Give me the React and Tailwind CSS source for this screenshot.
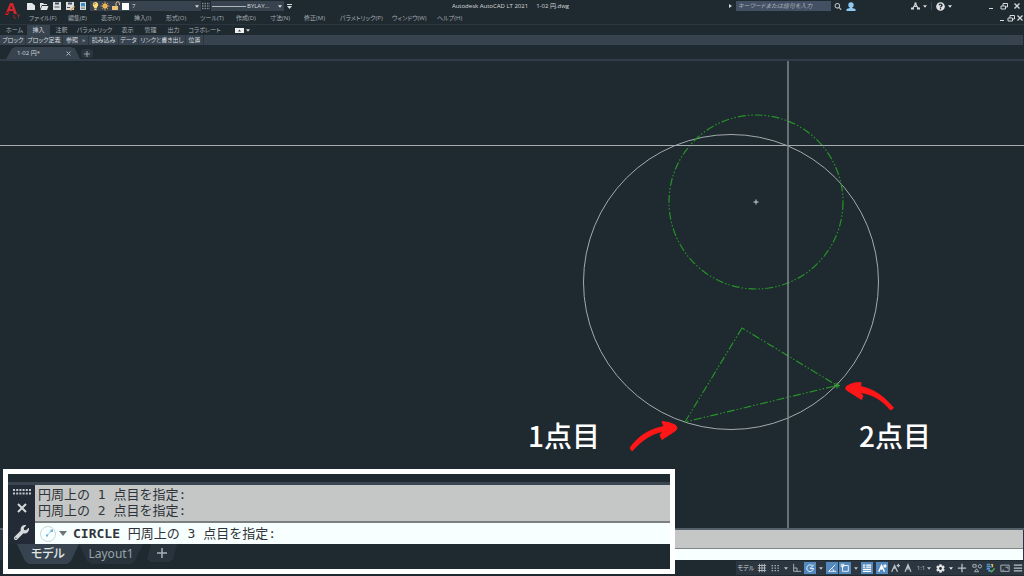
import { FaWrench, FaCog, FaSearch, FaUser, FaLightbulb, FaSun, FaQuestionCircle } from 'react-icons/fa';

const menuItems = [
  { label: 'ファイル(F)', width: 'w-[39px]' },
  { label: '編集(E)', width: 'w-[33px]' },
  { label: '表示(V)', width: 'w-[33px]' },
  { label: '挿入(I)', width: 'w-8' },
  { label: '形式(O)', width: 'w-[34px]' },
  { label: 'ツール(T)', width: 'w-[36px]' },
  { label: '作成(D)', width: 'w-[34px]' },
  { label: '寸法(N)', width: 'w-[34px]' },
  { label: '修正(M)', width: 'w-[36px]' },
  { label: 'パラメトリック(P)', width: 'w-[52px]' },
  { label: 'ウィンドウ(W)', width: 'w-[45px]' },
  { label: 'ヘルプ(H)', width: 'w-[36px]' },
];

const ribbonTabs = [
  { label: 'ホーム', width: 'w-[25px]' },
  { label: '挿入', width: 'w-[23px]', active: true },
  { label: '注釈', width: 'w-[23px]' },
  { label: 'パラメトリック', width: 'w-[43px]' },
  { label: '表示', width: 'w-[23px]' },
  { label: '管理', width: 'w-[23px]' },
  { label: '出力', width: 'w-[23px]' },
  { label: 'コラボレート', width: 'w-[39px]' },
];

const panels = [
  { label: 'ブロック', width: 'w-[25px]' },
  { label: 'ブロック定義', width: 'w-[37px]' },
  { label: '参照', width: 'w-[26px]', more: true },
  { label: '読み込み', width: 'w-[30px]' },
  { label: 'データ', width: 'w-[20px]' },
  { label: 'リンクと書き出し', width: 'w-[47px]' },
  { label: '位置', width: 'w-[18px]' },
];

const Caret = ({ className = '' }) => (
  <svg viewBox="0 0 6 4" className={`w-1 h-[3px] shrink-0 ${className}`}>
    <path d="M0 0h6L3 4z" fill="currentColor" />
  </svg>
);

const Logo = () => (
  <svg viewBox="0 0 16 17" className="w-4 h-[17px]">
    <path d="M1 13L6 1h3l4 11h-3l-1-3H5.500L4 13z" fill="#d3252c" />
    <path d="M6.200 7h2.200L7.300 3.500z" fill="#1f2930" />
    <path d="M1 13l3-1.500 1-2.500-3 1z" fill="#8e1218" />
    <path d="M10 13v3h2M13 13h3M14.500 13v3" stroke="#8e2a2c" fill="none" />
  </svg>
);

const QuickIcons = {
  new: <path d="M1 2h5l3 2.500V9H1z" fill="#e5e8ea" />,
  open: <path d="M1 2h3l1 1h3v1H3L1 8zM3 5h6.500L8 9H1.500z" fill="#e3e6e6" />,
  save: (
    <>
      <path d="M1 1h8v8H1z" fill="#dcdfe1" />
      <path d="M3 1.500h4v2H3zM2.500 5.500h5v1h-5z" fill="#49545e" />
    </>
  ),
  saveAs: (
    <>
      <path d="M1 1h8v8H1z" fill="#dcdfe1" />
      <path d="M3 1.500h4v2H3zM2 6h3v1H2z" fill="#49545e" />
      <path d="M5 9l4-4 1 1-4 4z" fill="#e0a04a" />
    </>
  ),
  plot: (
    <>
      <path d="M2 1h6v8H2z" fill="#d6dde2" />
      <path d="M3 2h4v3H3z" fill="#3d8bc4" />
      <path d="M3 6h4M3 7.500h4" stroke="#64717c" strokeWidth=".7" />
    </>
  ),
};

const QuickButton = ({ name, title }) => (
  <button title={title} className="w-[13px] flex justify-center">
    <svg viewBox="0 0 10 10" className="w-[10px] h-[10px]">{QuickIcons[name]}</svg>
  </button>
);

const WindowButtons = ({ className }) => (
  <div className={`flex items-center text-[#d5d9dc] ${className}`}>
    <button title="最小化">
      <svg viewBox="0 0 8 8" className="w-2 h-2"><path d="M2 6.500h4" stroke="currentColor" /></svg>
    </button>
    <button title="元に戻す">
      <svg viewBox="0 0 8 8" className="w-2 h-2" fill="none" stroke="currentColor">
        <path d="M1 4h4.500v3H1zM3 4V1.500h4.500V5H6" />
      </svg>
    </button>
    <button title="閉じる">
      <svg viewBox="0 0 8 8" className="w-2 h-2"><path d="M1.500 1.500l5 5M6.500 1.500l-5 5" stroke="currentColor" strokeWidth="1.300" /></svg>
    </button>
  </div>
);

const TitleBar = () => (
  <div className="flex items-center h-3">
    <div className="flex items-center">
      <QuickButton name="new" title="新規作成" />
      <QuickButton name="open" title="開く" />
      <QuickButton name="save" title="上書き保存" />
      <QuickButton name="saveAs" title="名前を付けて保存" />
      <QuickButton name="plot" title="印刷" />
    </div>
    <div className="relative flex items-center w-[111px] h-[10px] ml-px pl-[2px] bg-[#37434f] text-[#d5d9dc]">
      <FaLightbulb className="w-[7px] h-2 text-[#ffd97a]" />
      <svg viewBox="0 0 10 10" className="w-[10px] h-[10px] ml-px">
        <circle cx="5" cy="5" r="2.500" fill="#f7c765" />
        <path d="M5 .5v9M.5 5h9M2 2l6 6M8 2L2 8" stroke="#e8a94e" strokeWidth=".8" />
      </svg>
      <svg viewBox="0 0 10 10" className="w-[10px] h-[10px] ml-px">
        <path d="M1 5h6v4H1z" fill="#efc27a" />
        <path d="M5 5V2.500a1.500 1.500 0 0 1 3.500 0V4" fill="none" stroke="#e6c698" />
      </svg>
      <span className="w-[7px] h-[7px] ml-px bg-white" />
      <select aria-label="画層" className="appearance-none flex-1 h-full pl-[3px]">
        <option>7</option>
      </select>
      <Caret className="absolute right-[2px]" />
    </div>
    <svg viewBox="0 0 8 8" className="w-2 h-2 mx-px">
      <path d="M0 1.500h8M0 4h8M0 6.500h8" stroke="#7e8890" strokeWidth="1.500" strokeDasharray="1.500 1" />
    </svg>
    <div className="relative flex items-center w-[73px] h-[10px] pl-px bg-[#37434f] text-[#d5d9dc]">
      <span className="w-[34px] h-px bg-[#aeb5bb]" />
      <select aria-label="線種" className="appearance-none flex-1 h-full pl-px">
        <option>BYLAY...</option>
      </select>
      <Caret className="absolute right-[2px]" />
    </div>
    <button title="カスタマイズ" className="ml-[3px] text-[#d5d9dc]">
      <svg viewBox="0 0 5 5" className="w-[5px] h-[5px]"><path d="M0 0h5v1H0zM0 2h5L2.500 5z" fill="currentColor" /></svg>
    </button>
    <h1 className="flex-1 text-center text-[#d8dcde]">
      Autodesk AutoCAD LT 2021<span className="ml-2">1-02 円.dwg</span>
    </h1>
    <svg viewBox="0 0 3 4" className="w-[3px] h-1 mr-1"><path d="M0 0l3 2-3 2z" fill="#d5d9dc" /></svg>
    <input
      type="search"
      aria-label="検索"
      placeholder="キーワードまたは語句を入力"
      className="w-[95px] h-[10px] px-[2px] bg-[#434f62] placeholder:italic placeholder:text-[#a9b2bf]"
    />
    <button title="検索" className="ml-[3px]"><FaSearch className="w-2 h-[7px] text-[#b9bfc4]" /></button>
    <button title="サインイン" className="ml-1">
      <svg viewBox="0 0 10 9" className="w-[10px] h-[9px]" fill="#8fc8f2"><circle cx="5" cy="3" r="2.700" /><path d="M3.800 5h2.400v1L9.500 7v2H.5V7l3.300-1z" /></svg>
    </button>
    <button title="Autodesk App Store" className="flex items-center gap-[3px] ml-[55px] text-[#d5d9dc]">
      <svg viewBox="0 0 9 8" className="w-[9px] h-2" fill="none" stroke="currentColor">
        <path d="M2 6l2.500-4L7 6M3 4.500h3" strokeWidth="1.200" />
        <path d="M0 6.500h3M6 6.500h3M3.500 1.500h2" strokeWidth="2" />
      </svg>
      <Caret />
    </button>
    <span className="w-px h-2 mx-1 bg-[#3a4651]" />
    <button title="ヘルプ" className="flex items-center gap-[3px] text-[#e2e5e7]">
      <FaQuestionCircle className="w-[9px] h-[9px]" />
      <Caret />
    </button>
    <WindowButtons className="gap-[5px] ml-[35px] mr-[3px]" />
  </div>
);

const MenuBar = () => (
  <nav className="flex items-center h-3 pl-[5px] text-[#a5adb3]">
    {menuItems.map((item) => (
      <button key={item.label} className={`text-left whitespace-nowrap ${item.width}`}>{item.label}</button>
    ))}
    <WindowButtons className="gap-px ml-auto" />
  </nav>
);

const Ribbon = () => (
  <>
    <div className="flex h-[11px] pl-[2px] border-t border-[#2b3640] text-[#a5adb3]">
      {ribbonTabs.map((tab) => (
        <button
          key={tab.label}
          className={`whitespace-nowrap ${tab.width} ${tab.active ? 'bg-[#37434f] text-[#d5d9dc]' : ''}`}
        >
          {tab.label}
        </button>
      ))}
      <button title="リボン表示" className="flex items-center gap-[2px] ml-[11px] text-[#d5d9dc]">
        <svg viewBox="0 0 9 5" className="w-[9px] h-[5px]"><path d="M0 0h9v5H0z" fill="#eceff0" /><path d="M3 3.500h3L4.500 1.500z" fill="#37434f" /></svg>
        <Caret />
      </button>
    </div>
    <div className="flex h-[10px] mr-px pl-px bg-[#37434f] text-[#d5d9dc]">
      {panels.map((panel) => (
        <button key={panel.label} className={`flex items-center justify-center gap-1 whitespace-nowrap border-r border-[#2b3640] ${panel.width}`}>
          {panel.label}
          {panel.more && <span>»</span>}
        </button>
      ))}
    </div>
  </>
);

const FileTabs = () => (
  <div className="flex items-end h-4 pl-[6px] border-b-2 border-[#303c48] text-[#d5d9dc]">
    <div className="flex items-center justify-between w-[74px] h-3 pl-[11px] pr-[9px] bg-[#37434f] [clip-path:polygon(0_100%,6px_12%,9px_0,65px_0,69px_12%,100%_100%)]">
      <span>1-02 円*</span>
      <button title="閉じる">
        <svg viewBox="0 0 5 5" className="w-[5px] h-[5px]"><path d="M.5.5l4 4M4.500.5l-4 4" stroke="#b7bec4" strokeWidth=".9" /></svg>
      </button>
    </div>
    <button title="新規図面" className="flex items-center justify-center w-3 h-[9px] mb-px ml-px rounded-sm bg-[#2b3640]">
      <svg viewBox="0 0 6 6" className="w-[6px] h-[6px]"><path d="M3 0v6M0 3h6" stroke="#98a1a8" /></svg>
    </button>
  </div>
);

const Drawing = () => (
  <main className="relative flex-1 min-h-0">
    <svg
      viewBox="0 61 1024 467"
      preserveAspectRatio="xMidYMid slice"
      className="absolute inset-0 w-full h-full"
      fill="none"
    >
      <circle cx="731" cy="282" r="147.500" stroke="#a3aaad" />
      {/* construction geometry */}
      <g stroke="#279327" strokeWidth="1.200" strokeDasharray="8 2 1.500 2 1.500 2">
        <circle cx="756" cy="202" r="87" />
        <path d="M742 328L685 422L837 385.500Z" />
      </g>
      <path d="M834 385.500h6M837 382.500v6M835 383.500l4 4M839 383.500l-4 4" stroke="#2ea52e" />
      <path d="M753.500 202h5M756 199.500v5" stroke="#d0d4d6" />
      {/* crosshair */}
      <path d="M0 145.500h1024" stroke="#a5abae" />
      <path d="M788 61v467" stroke="#7f888d" strokeWidth="1.500" />
      {/* annotations */}
      <g fill="#ff1616" stroke="#ff1616" strokeLinejoin="round">
        <path d="M630 448C638 436 650 429 664 426.500L662 421.500Q670 422 675 425Q679 428 675 431L662 439.500L660 435L663 431.500C652 433 642 440 632 451Z" />
        <path d="M893.500 408C884 396 873 389 860.500 386.500L861 382.500Q853 382 847 386Q844 389 848 391L861.500 399.500L863 396L860 392.500C873 394 882 400 890.500 410Z" />
      </g>
      <g fill="#ffffff" className="font-['Noto_Sans_CJK_JP',sans-serif] text-[28px] font-medium [font-feature-settings:normal]">
        <text x="528" y="447">1点目</text>
        <text x="859" y="447">2点目</text>
      </g>
    </svg>
  </main>
);

const CommandBar = () => (
  <div className="flex h-8 pr-px border-t-2 border-[#56606a] bg-[#2a3440]">
    <div className="w-3" />
    <div className="flex-1">
      <div className="h-[19px] bg-[#c4c7c6] border-b border-[#7f8584]" />
      <div className="h-[11px] bg-[#f8ffff]" />
    </div>
  </div>
);

const StatusIcons = {
  grid: <path d="M3 1v10M6 1v10M9 1v10M1 3h10M1 6h10M1 9h10" />,
  snap: <path d="M2 3h9M2 6h9M2 9h9" strokeWidth="1.500" strokeDasharray="1.500 2" />,
  ortho: <path d="M2 1v9h9M2 6h4v4" />,
  polar: <path d="M9 3.500A4 4 0 1 0 10 7M6 6.500L11 2M6 6.500h5" />,
  track: <path d="M10 2L2 10h9M6 6.500q2 1.500 2 3.500" />,
  osnap: <path d="M3 3h7v7H3zM1.500 1.500h3v3h-3z" />,
  weight: <path d="M5 2.500h6M5 5h6M1 7.500h10M1 10h10M1 2.500h3M1 5h3" strokeWidth="1.500" />,
  annoVisible: <path d="M2 10.500L5.500 3L9 10.500M5.500 3v5M8 2l3 3M11 2L8 5" strokeWidth="1.700" />,
  annoAuto: <path d="M2 10.500L5.500 3L9 10.500M5.500 3v4M8 3h4M10 1v4" strokeWidth="1.500" />,
  anno: <path d="M2.500 10.500L6 2L9.500 10.500M6 3v5" strokeWidth="1.500" />,
  plus: <path d="M6 1v10M1 6h10" strokeWidth="1.500" />,
  isolate: <path d="M1 2h4v3H1zM7.500 4a2 2 0 1 0 4 0 2 2 0 1 0-4 0M3 10.500L5.500 7L8 10.500z" />,
  perf: (
    <>
      <path d="M2 2h4M2 4.500h6M2 7h4M4 9.500h3" stroke="#4f93cf" strokeWidth="2" />
      <path d="M7 2h2v3" stroke="#e8b64c" strokeWidth="1.500" />
      <path d="M6 8.500l2 2 3.500-4" stroke="#54b35b" strokeWidth="1.500" />
    </>
  ),
  fullscreen: <path d="M1 2.500h10v7.500H1zM6.500 5h3v2M3 8.500h2" />,
  menu: <path d="M1 2.500h10M1 6h10M1 9.500h10" strokeWidth="1.500" />,
};

const StatusButton = ({ name, title, active, caret }) => (
  <button title={title} className="flex items-center h-full gap-px">
    <span className={`flex items-center justify-center w-3 h-3 ${active ? 'bg-[#5489bd] text-white' : ''}`}>
      <svg viewBox="0 0 12 12" className="w-[10px] h-[10px]" fill="none" stroke="currentColor">{StatusIcons[name]}</svg>
    </span>
    {caret && <span className="flex justify-center w-2"><Caret /></span>}
  </button>
);

const StatusBar = () => (
  <footer className="flex items-center justify-end h-4">
    <div className="flex items-center gap-px h-[14px] pl-px bg-[#2b3640] text-[#bcc3c8]">
      <button className="w-[18px] whitespace-nowrap text-[#d5d9dc]">モデル</button>
      <StatusButton name="grid" title="作図グリッド" />
      <StatusButton name="snap" title="スナップ" caret />
      <StatusButton name="ortho" title="直交モード" />
      <StatusButton name="polar" title="極トラッキング" active caret />
      <StatusButton name="track" title="オブジェクトスナップトラッキング" active />
      <StatusButton name="osnap" title="オブジェクトスナップ" active caret />
      <StatusButton name="weight" title="線の太さ" active />
      <span className="w-px" />
      <StatusButton name="annoVisible" title="注釈オブジェクト" active />
      <StatusButton name="annoAuto" title="尺度を追加" />
      <StatusButton name="anno" title="注釈尺度" />
      <button title="尺度" className="flex items-center justify-center gap-[2px] w-[18px]">1:1<Caret /></button>
      <button title="ワークスペース" className="flex items-center justify-center gap-1 w-[21px] text-[#e2e5e7]">
        <FaCog className="w-[9px] h-[9px]" />
        <Caret />
      </button>
      <StatusButton name="plus" title="注釈モニター" />
      <span className="w-px" />
      <StatusButton name="isolate" title="選択表示" />
      <StatusButton name="perf" title="グラフィックス" />
      <span className="w-px" />
      <StatusButton name="fullscreen" title="フルスクリーン" />
      <StatusButton name="menu" title="カスタマイズ" />
    </div>
  </footer>
);

// enlarged command window shown over the lower left corner
const CommandInset = () => (
  <section className="absolute left-[3px] bottom-[2px] w-[672px] max-w-full border-[5px] border-white bg-[#1f2930] font-['DejaVu_Sans_Mono','Noto_Sans_CJK_JP',monospace] text-[13px] leading-4 text-[#30343a] [font-feature-settings:normal]">
    <div className="h-2" />
    <div className="flex border-t-[3px] border-[#3a4551]">
      <div className="flex flex-col items-center w-[27px] pt-1 bg-[#222b36] text-[#d5d9dc]">
        <svg viewBox="0 0 18 6" className="w-[18px] h-[6px]">
          <path d="M0 1h18M0 4.500h18" stroke="#c3c8cc" strokeWidth="2" strokeDasharray="2 1.200" />
        </svg>
        <button title="閉じる" className="mt-2">
          <svg viewBox="0 0 10 10" className="w-[10px] h-[10px]"><path d="M1 1l8 8M9 1L1 9" stroke="currentColor" strokeWidth="2" /></svg>
        </button>
        <button title="設定" className="mt-3"><FaWrench className="w-[15px] h-[15px]" /></button>
      </div>
      <div className="flex-1">
        <div className="h-[38px] pt-[2px] pl-[3px] bg-[#c4c7c6] border-b-2 border-[#7a807f]">
          <p>円周上の 1 点目を指定:</p>
          <p>円周上の 2 点目を指定:</p>
        </div>
        <div className="flex items-center h-[21px] pl-1 bg-[#f8ffff]">
          <button title="最近使用したコマンド" className="flex items-center gap-[2px]">
            <svg viewBox="0 0 18 18" className="w-[18px] h-[18px]" fill="none">
              <circle cx="9" cy="9" r="7.500" stroke="#cfd6da" />
              <path d="M8.500 10l4-4" stroke="#6cb3e0" strokeWidth="1" strokeDasharray="2 1" />
              <path d="M11.500 4.500h2.500v2.500h-2.500zM7 9.500h2v2H7z" fill="#6cb3e0" />
            </svg>
            <svg viewBox="0 0 8 5" className="w-2 h-[5px]"><path d="M0 0h8L4 5z" fill="#6d7478" /></svg>
          </button>
          <label htmlFor="command" className="ml-[6px] whitespace-nowrap">
            <b>CIRCLE</b> 円周上の 3 点目を指定:
          </label>
          <input id="command" type="text" className="flex-1 min-w-0 h-full outline-none" />
        </div>
      </div>
    </div>
    <div className="flex items-start h-[25px] pl-[9px] font-['Noto_Sans','Noto_Sans_CJK_JP',sans-serif] text-[12px] leading-5 text-[#9aa3aa]">
      <button className="w-[62px] h-5 bg-[#37434f] text-[#e2e5e7] font-medium [font-feature-settings:'palt'] [clip-path:polygon(0_0,100%_0,54px_85%,50px_100%,12px_100%,8px_85%)]">モデル</button>
      <button className="w-16 h-5 bg-[#28333c] [clip-path:polygon(0_0,100%_0,56px_85%,52px_100%,12px_100%,8px_85%)]">Layout1</button>
      <button title="新規レイアウト" className="flex items-center justify-center w-[30px] h-[18px] ml-1 bg-[#28333c] [clip-path:polygon(4px_0,100%_0,26px_85%,22px_100%,4px_100%,0_85%)]">
        <svg viewBox="0 0 10 10" className="w-[10px] h-[10px]"><path d="M5 0v10M0 5h10" stroke="#a9b1b7" strokeWidth="1.500" /></svg>
      </button>
    </div>
  </section>
);

export default function App() {
  return (
    <div className="relative flex flex-col h-screen overflow-hidden bg-[#1f2930] font-['Open_Sans','Noto_Sans_CJK_JP',sans-serif] text-[6px] leading-[10px] [font-feature-settings:'palt']">
      <header>
        <div className="flex">
          <div className="flex justify-center w-6 pt-[2px]"><Logo /></div>
          <div className="flex-1">
            <TitleBar />
            <MenuBar />
          </div>
        </div>
        <Ribbon />
        <FileTabs />
      </header>
      <Drawing />
      <CommandBar />
      <StatusBar />
      <CommandInset />
    </div>
  );
}
